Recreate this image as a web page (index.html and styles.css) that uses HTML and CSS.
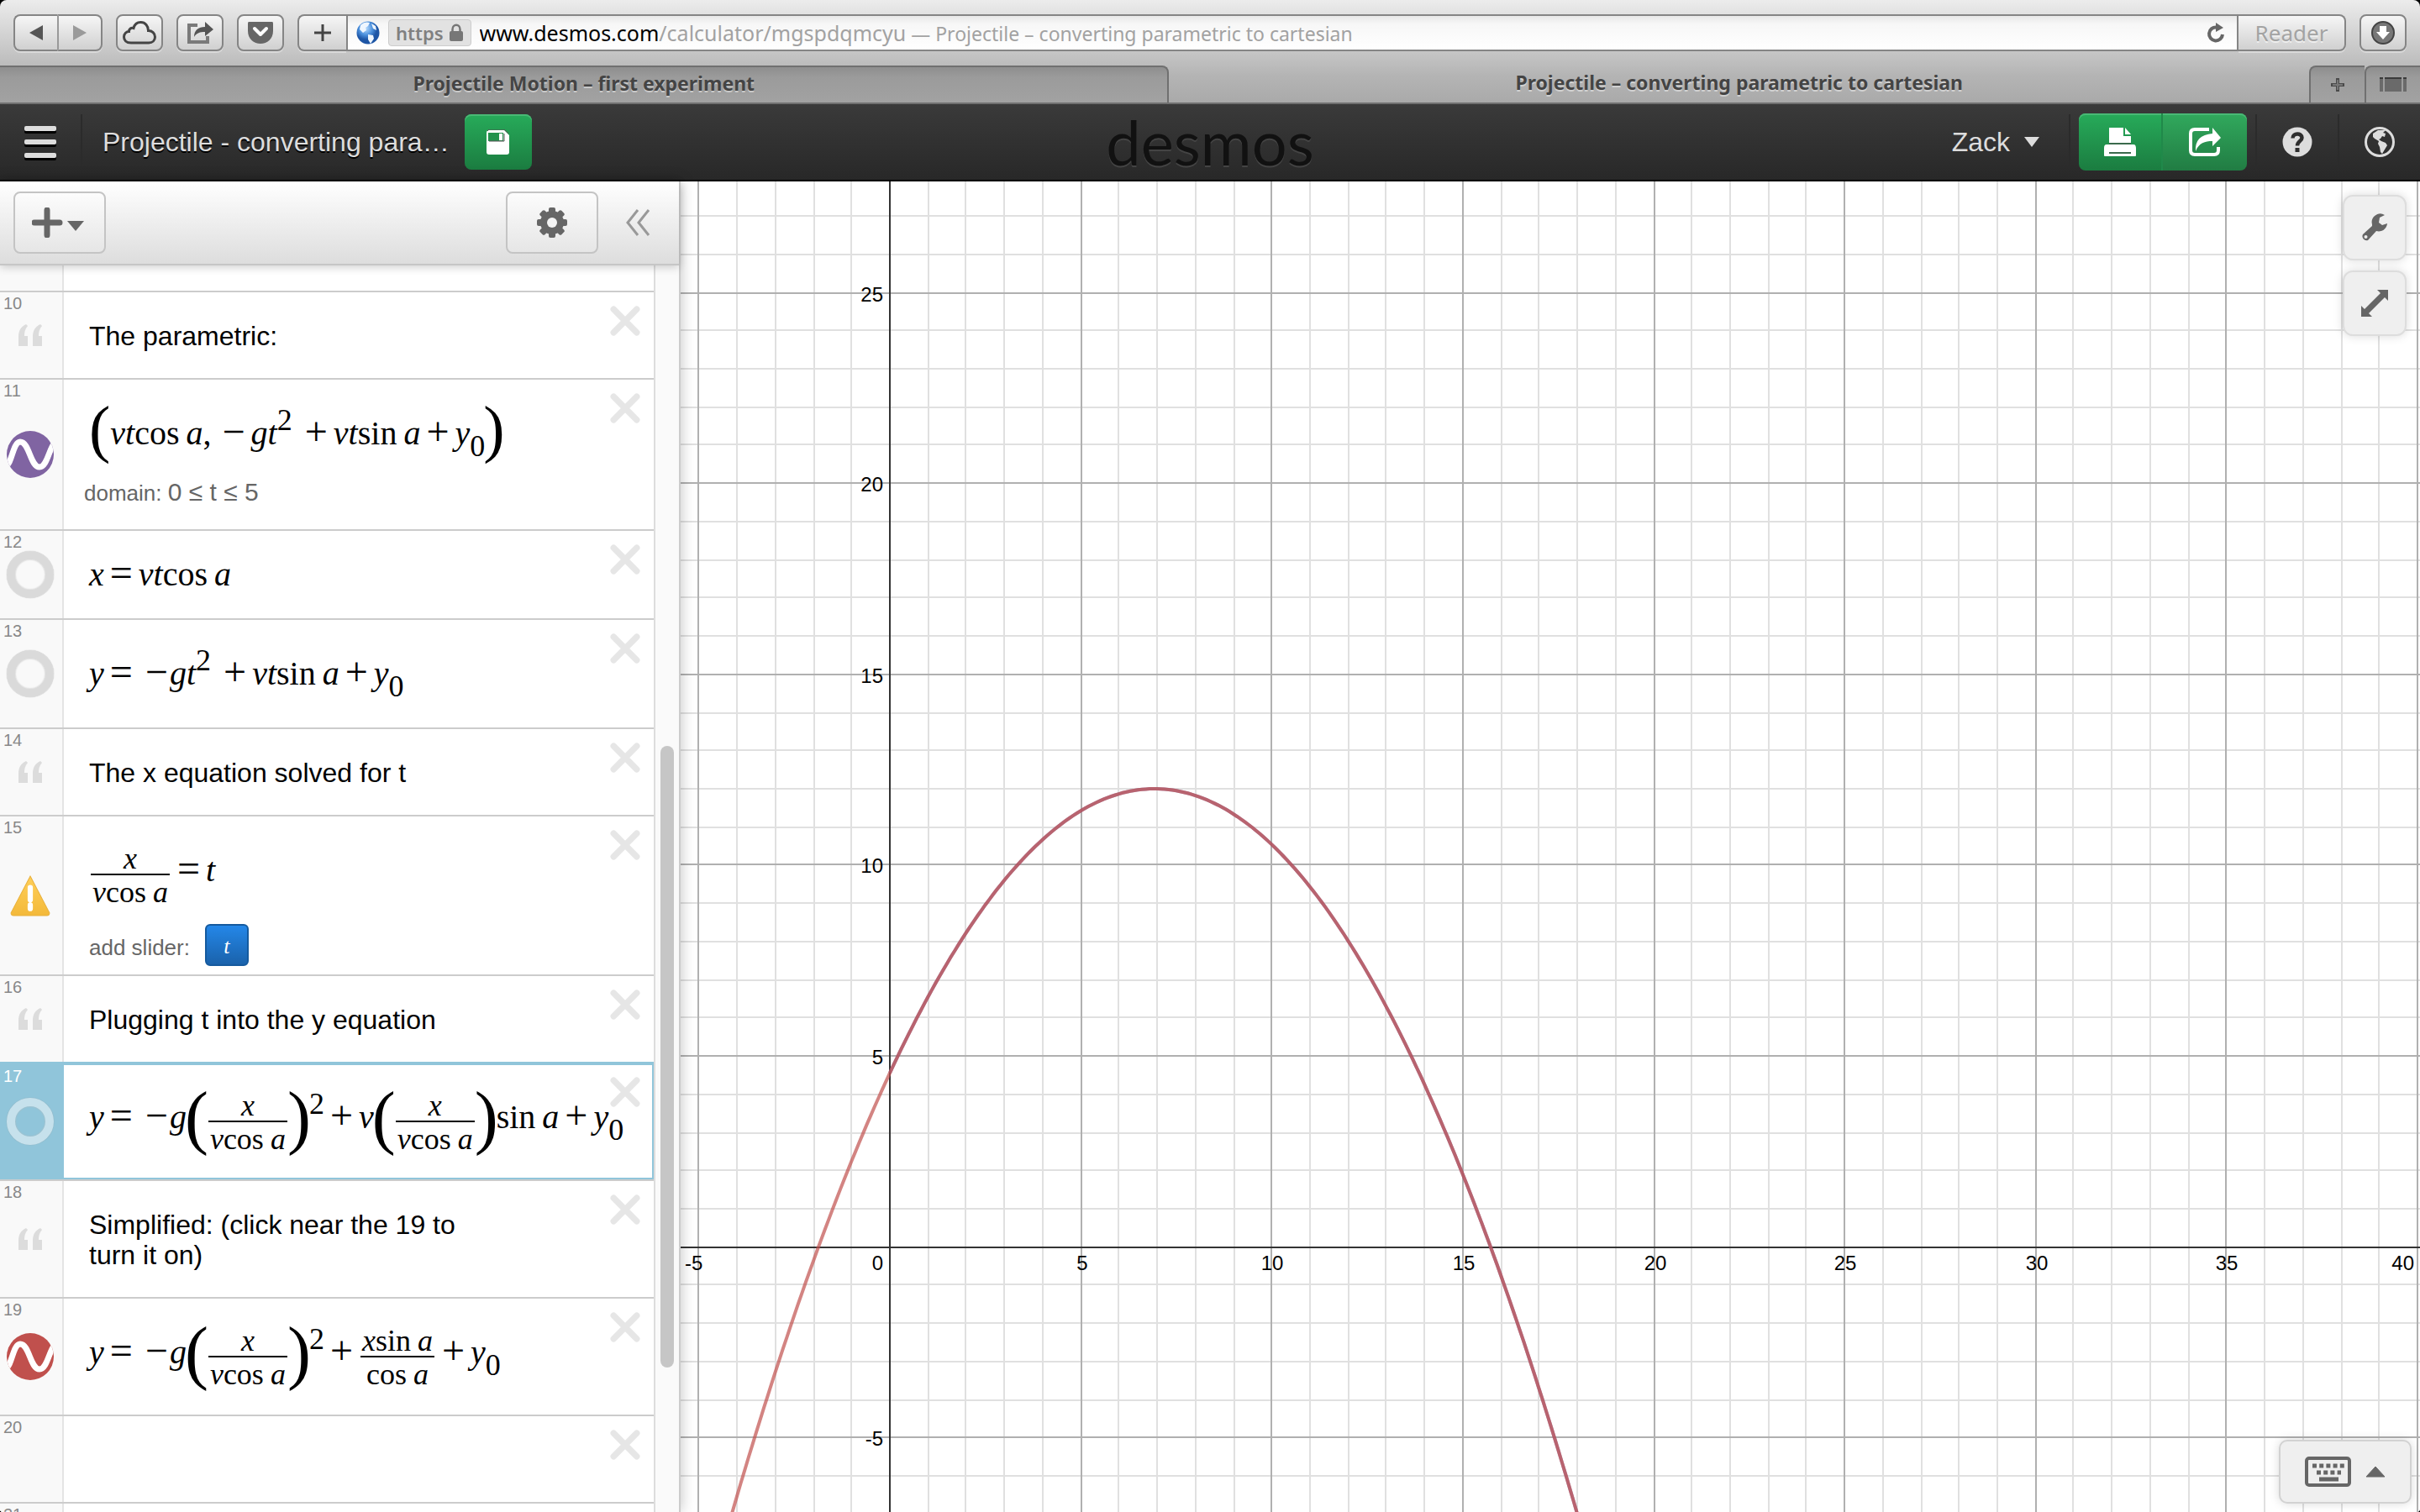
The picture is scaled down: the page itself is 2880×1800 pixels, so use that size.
FILE: index.html
```html
<!DOCTYPE html>
<html lang="en">
<head>
<meta charset="utf-8">
<title>Projectile – converting parametric to cartesian</title>
<link rel="stylesheet" href="styles.css">
</head>
<body>
<svg class="defs" aria-hidden="true">
  <defs>
    <symbol id="i-close" viewBox="0 0 34 34"><path d="M4 4L30 30M30 4L4 30" stroke="currentColor" stroke-width="7" stroke-linecap="round" fill="none"/></symbol>
    <symbol id="i-quote" viewBox="0 0 28 26"><path d="M9 0L11 2C7.500 6 7 10 7 14H11V26H0V15C0 8 2.500 3 9 0ZM26 0L28 2C24.500 6 24 10 24 14H28V26H17V15C17 8 19.500 3 26 0Z" fill="currentColor"/></symbol>
    <symbol id="i-wave" viewBox="0 0 56 56"><path d="M-2 42C6 42 7 13 16 13C27 13 28 43 39 43C48 43 50 22 57 14" stroke="#fff" stroke-width="7" fill="none"/></symbol>
  </defs>
</svg>
<div class="window">
  <header class="toolbar">
    <div class="nav-pair">
      <button class="chrome-btn back" aria-label="Back"><svg width="18" height="20" viewBox="0 0 18 20"><path d="M17 1V19L1 10Z" fill="#555"/></svg></button>
      <button class="chrome-btn forward" aria-label="Forward"><svg width="18" height="20" viewBox="0 0 18 20"><path d="M1 1V19L17 10Z" fill="#9a9a9a"/></svg></button>
    </div>
    <button class="chrome-btn" aria-label="iCloud tabs"><svg width="40" height="28" viewBox="0 0 40 28"><path d="M10 26C4 26 1.500 22.500 1.500 19C1.500 15 4.500 12.500 7.500 12.500C7.500 9.500 10 7.500 13 8.500C14 4.500 17 1.500 21.500 1.500C27 1.500 30.500 6 30.500 11.500C35 11.500 38.500 14.500 38.500 19C38.500 23 35.500 26 31 26Z" fill="none" stroke="#444" stroke-width="3"/></svg></button>
    <button class="chrome-btn" aria-label="Share"><svg width="34" height="28" viewBox="0 0 34 28"><path d="M14 5H4V25H26V18" fill="none" stroke="#7a7a7a" stroke-width="4"/><path d="M10 19C10 11 15 7 23 7V1L33 10L23 18V13C17 13 13 14 10 19Z" fill="#555"/></svg></button>
    <button class="chrome-btn" aria-label="Pocket"><svg width="32" height="28" viewBox="0 0 32 28"><path d="M2 1H30Q31 1 31 3V12C31 21 24 27 16 27C8 27 1 21 1 12V3Q1 1 2 1Z" fill="#666"/><path d="M9 9L16 16L23 9" fill="none" stroke="#fff" stroke-width="4" stroke-linecap="round" stroke-linejoin="round"/></svg></button>
    <div class="address">
      <button class="chrome-btn add" aria-label="Add bookmark"><svg width="20" height="20" viewBox="0 0 20 20"><path d="M10 0V20M0 10H20" stroke="#444" stroke-width="3"/></svg></button>
      <div class="url-field">
        <svg width="28" height="30" viewBox="0 0 28 30"><defs><radialGradient id="globe" cx=".4" cy=".3"><stop offset="0" stop-color="#b9dcff"/><stop offset=".6" stop-color="#4a8fdc"/><stop offset="1" stop-color="#1d55a5"/></radialGradient></defs><circle cx="14" cy="15" r="13.500" fill="url(#globe)"/><path d="M5 6C9 2 13 2 16 3L14 7L11 9L12 12L8 15L4 11ZM18 4L23 7L24 12L20 10ZM14 17L20 18L21 22L17 28L14 23Z" fill="#eef6ff"/></svg>
        <span class="https">https<svg width="18" height="22" viewBox="0 0 18 22"><path d="M4.500 10V7C4.500 0 13.500 0 13.500 7V10" fill="none" stroke="#777" stroke-width="2.500"/><rect x="1" y="9" width="16" height="12" rx="2" fill="#777"/></svg></span>
        <div class="url" role="textbox" contenteditable="true" spellcheck="false" aria-label="Address"><span class="host">www.desmos.com</span><span>/calculator/mgspdqmcyu</span><span class="page-title"> — Projectile – converting parametric to cartesian</span></div>
        <button class="reload" aria-label="Reload"><svg width="22" height="24" viewBox="0 0 22 24"><path d="M12 5.500A8 8 0 1 0 19 14" fill="none" stroke="#666" stroke-width="4"/><path d="M11 0L20 6L11 11Z" fill="#666"/></svg></button>
      </div>
      <button class="chrome-btn reader" disabled>Reader</button>
    </div>
    <button class="chrome-btn" aria-label="Downloads"><svg width="28" height="28" viewBox="0 0 28 28"><circle cx="14" cy="14" r="13" fill="#777" stroke="#444" stroke-width="2"/><path d="M10 6H18V13H22L14 22L6 13H10Z" fill="#fff"/></svg></button>
  </header>
  <nav class="tabs">
    <button class="tab inactive">Projectile Motion – first experiment</button>
    <button class="tab">Projectile – converting parametric to cartesian</button>
    <button class="tab-tool" aria-label="New tab"><svg width="16" height="16" viewBox="0 0 16 16"><path d="M8 0V16M0 8H16" stroke="#4a4a4a" stroke-width="4"/><path d="M8 2V14M2 8H14" stroke="#777" stroke-width="2"/></svg></button>
    <button class="tab-tool" aria-label="Show all tabs"><svg width="32" height="18" viewBox="0 0 32 18"><path d="M0 0H4V17H0ZM6 0H26V17H6ZM28 0H32V17H28Z" fill="#6a6a6a"/><path d="M0 1H4M6 1H26M28 1H32" stroke="#3a3a3a" stroke-width="2"/></svg></button>
  </nav>

  <header class="app-bar">
    <div class="bar-left">
      <button class="menu" aria-label="Open menu"><span></span><span></span><span></span></button>
      <h1 class="graph-title">Projectile - converting para…</h1>
      <button class="green save" aria-label="Save"><svg width="28" height="30" viewBox="0 0 28 30"><path d="M3 1H21L27 7V27Q27 30 24 30H3Q0 30 0 27V4Q0 1 3 1Z" fill="#fff"/><path d="M2 4H20V14H2Z" fill="#23924c"/><path d="M1 2L3 0H21L26 5" fill="none" stroke="#555" stroke-width="1"/><rect x="15" y="5" width="4" height="8" fill="#fff"/><path d="M3 14H21V5" stroke="#555" fill="none"/></svg></button>
    </div>
    <a class="logo" href="#">desmos</a>
    <div class="bar-right">
      <button class="user">Zack<svg width="20" height="13" viewBox="0 0 20 13"><path d="M1 0H19L10 12Z" fill="#ddd"/></svg></button>
      <div class="green-group">
        <button class="green" aria-label="Print"><svg width="40" height="36" viewBox="0 0 40 36"><path d="M7 1H24V11H33V20H7Z" fill="#fff"/><path d="M26 1L33 9H26Z" fill="#fff"/><path d="M4 21H36Q39 21 39 25V34Q39 35 38 35H2Q1 35 1 34V25Q1 21 4 21Z" fill="#fff"/><path d="M7 20H33M7 31H33" stroke="#3b6a4c" stroke-width="2"/></svg></button>
        <button class="green" aria-label="Share graph"><svg width="40" height="36" viewBox="0 0 40 36"><path d="M25 3H8Q3 3 3 8V28Q3 33 8 33H31Q36 33 36 28V24" fill="none" stroke="#fff" stroke-width="4"/><path d="M9 29C8 16 15 9 29 8V1L39 13L29 23V17C20 17 13 19 9 29Z" fill="#fff"/></svg></button>
      </div>
      <button class="round" aria-label="Help"><svg width="36" height="36" viewBox="0 0 36 36"><circle cx="18" cy="18" r="17.500" fill="#ddd"/><path d="M12.500 13.500C12.500 7 23.500 7 23.500 13C23.500 17 18 17 18 22.500" fill="none" stroke="#2e2e2e" stroke-width="4.500"/><rect x="15.500" y="25" width="5" height="5" fill="#2e2e2e"/></svg></button>
      <button class="round" aria-label="Language"><svg width="36" height="36" viewBox="0 0 36 36"><circle cx="18" cy="18" r="16.500" fill="none" stroke="#ddd" stroke-width="3"/><path d="M10 8L16 4L25 4L22 7L25 8L24 12L21 11L19 14L17 15L20 17L25 19L27 22L24 27L21 32L19 30L18 24L16 20L17 17L12 14L10 12Z" fill="#ddd"/></svg></button>
    </div>
  </header>

  <main class="workspace">
    <section class="panel" aria-label="Expressions">
      <div class="panel-head">
        <button class="light-btn add-item" aria-label="Add item"><svg width="62" height="36" viewBox="0 0 62 36"><path d="M18 3V33M3 18H33" stroke="#666" stroke-width="7" stroke-linecap="round"/><path d="M42 16H62L52 28Z" fill="#666"/></svg></button>
        <div class="head-right">
          <button class="light-btn" aria-label="Settings"><svg width="38" height="38" viewBox="-19 -19 38 38"><g fill="#666"><circle r="14"/><g id="teeth"><rect x="-4" y="-18" width="8" height="36" rx="2"/><rect x="-18" y="-4" width="36" height="8" rx="2"/></g><use href="#teeth" transform="rotate(45)"/></g><circle r="6" fill="#f3f3f3"/></svg></button>
          <button class="collapse" aria-label="Hide list"><svg width="30" height="34" viewBox="0 0 30 34"><path d="M15 2L3 17L15 32M28 2L16 17L28 32" fill="none" stroke="#999" stroke-width="3"/></svg></button>
        </div>
      </div>
      <div class="panel-body">
      <ol class="list">
        <li class="row sliver"><div class="gutter"></div><div class="body"></div></li>

        <li class="row"><div class="gutter"><span class="num">10</span><svg class="quote"><use href="#i-quote"/></svg></div>
          <div class="body note"><p>The parametric:</p><button class="close" aria-label="Delete"><svg><use href="#i-close"/></svg></button></div></li>

        <li class="row"><div class="gutter"><span class="num">11</span><svg class="marker purple"><use href="#i-wave"/></svg></div>
          <div class="body parametric"><div class="math"><span class="paren small open">(</span><i>v</i><i>t</i><span class="fn">cos</span><i>a</i><span class="comma">,</span><span class="op">−</span><i>g</i><i>t</i><span class="sup wide">2</span><span class="op">+</span><i>v</i><i>t</i><span class="fn">sin</span><i>a</i><span class="op">+</span><i>y</i><span class="sub">0</span><span class="paren small">)</span></div>
          <div class="domain">domain: <span>0 ≤ t ≤ 5</span></div><button class="close" aria-label="Delete"><svg><use href="#i-close"/></svg></button></div></li>

        <li class="row"><div class="gutter"><span class="num">12</span><span class="marker off"></span></div>
          <div class="body simple"><div class="math"><i>x</i><span class="op">=</span><i>v</i><i>t</i><span class="fn">cos</span><i>a</i></div><button class="close" aria-label="Delete"><svg><use href="#i-close"/></svg></button></div></li>

        <li class="row"><div class="gutter"><span class="num">13</span><span class="marker off"></span></div>
          <div class="body medium"><div class="math"><i>y</i><span class="op">=</span><span class="neg">−</span><i>g</i><i>t</i><span class="sup wide">2</span><span class="op">+</span><i>v</i><i>t</i><span class="fn">sin</span><i>a</i><span class="op">+</span><i>y</i><span class="sub">0</span></div><button class="close" aria-label="Delete"><svg><use href="#i-close"/></svg></button></div></li>

        <li class="row"><div class="gutter"><span class="num">14</span><svg class="quote"><use href="#i-quote"/></svg></div>
          <div class="body note"><p>The x equation solved for t</p><button class="close" aria-label="Delete"><svg><use href="#i-close"/></svg></button></div></li>

        <li class="row"><div class="gutter"><span class="num">15</span><svg class="warn" viewBox="0 0 48 48"><defs><linearGradient id="amber" x2="0" y2="1"><stop offset="0" stop-color="#ffcf5a"/><stop offset="1" stop-color="#f3b93a"/></linearGradient></defs><path d="M24 2L46 44Q46 47 43 47H5Q2 47 2 44Z" fill="url(#amber)" stroke="#e9b13c" stroke-width="1"/><path d="M24 15V29M24 35V39" stroke="#fff" stroke-width="6" stroke-linecap="round"/></svg></div>
          <div class="body undefined"><div class="math"><span class="frac"><span class="n"><i>x</i></span><span class="d"><i>v</i><span class="fn">cos</span><i>a</i></span></span><span class="op">=</span><i>t</i></div>
          <div class="slider-row"><span id="slider-label">add slider:</span><button class="slider-btn" aria-describedby="slider-label">t</button></div><button class="close" aria-label="Delete"><svg><use href="#i-close"/></svg></button></div></li>

        <li class="row"><div class="gutter"><span class="num">16</span><svg class="quote"><use href="#i-quote"/></svg></div>
          <div class="body note"><p>Plugging t into the y equation</p><button class="close" aria-label="Delete"><svg><use href="#i-close"/></svg></button></div></li>

        <li class="row selected"><div class="gutter"><span class="num">17</span><span class="marker off"></span></div>
          <div class="body tall"><div class="math"><i>y</i><span class="op">=</span><span class="neg">−</span><i>g</i><span class="paren">(</span><span class="frac"><span class="n"><i>x</i></span><span class="d"><i>v</i><span class="fn">cos</span><i>a</i></span></span><span class="paren">)</span><span class="sup">2</span><span class="op">+</span><i>v</i><span class="paren">(</span><span class="frac"><span class="n"><i>x</i></span><span class="d"><i>v</i><span class="fn">cos</span><i>a</i></span></span><span class="paren">)</span><span class="fn">sin</span><i>a</i><span class="op">+</span><i>y</i><span class="sub">0</span></div><button class="close" aria-label="Delete"><svg><use href="#i-close"/></svg></button></div></li>

        <li class="row"><div class="gutter"><span class="num">18</span><svg class="quote"><use href="#i-quote"/></svg></div>
          <div class="body note"><p>Simplified: (click near the 19 to turn it on)</p><button class="close" aria-label="Delete"><svg><use href="#i-close"/></svg></button></div></li>

        <li class="row"><div class="gutter"><span class="num">19</span><svg class="marker red"><use href="#i-wave"/></svg></div>
          <div class="body tall"><div class="math"><i>y</i><span class="op">=</span><span class="neg">−</span><i>g</i><span class="paren">(</span><span class="frac"><span class="n"><i>x</i></span><span class="d"><i>v</i><span class="fn">cos</span><i>a</i></span></span><span class="paren">)</span><span class="sup">2</span><span class="op">+</span><span class="frac"><span class="n"><i>x</i><span class="fn">sin</span><i>a</i></span><span class="d"><span class="fn">cos</span><i>a</i></span></span><span class="op">+</span><i>y</i><span class="sub">0</span></div><button class="close" aria-label="Delete"><svg><use href="#i-close"/></svg></button></div></li>

        <li class="row"><div class="gutter"><span class="num">20</span></div><div class="body empty"><button class="close" aria-label="Delete"><svg><use href="#i-close"/></svg></button></div></li>
        <li class="row"><div class="gutter"><span class="num">21</span></div><div class="body empty"></div></li>
      </ol>
      <div class="scroll-track"><div class="scroll-thumb"></div></div>
      </div>
    </section>

    <section class="graph" aria-label="Graph">
      <svg id="plot" width="100%" height="100%"></svg>
      <div class="graph-tools">
        <button class="float-btn" aria-label="Graph settings"><svg width="34" height="34" viewBox="0 0 34 34"><path d="M29 2A10 10 0 0 0 14 13L14 15L3 25A5 5 0 0 0 9 32L19 21A10 10 0 0 0 32 12L26 14L22 11L23 5Z" fill="#666"/><circle cx="6.500" cy="28" r="2" fill="#eee"/></svg></button>
        <button class="float-btn" aria-label="Zoom fit"><svg width="34" height="34" viewBox="0 0 34 34"><path d="M20 1H33V14L29 10L10 29L14 33H1V20L5 24L24 5Z" fill="#666"/></svg></button>
      </div>
      <button class="keypad" aria-label="Show keypad"><svg width="56" height="36" viewBox="0 0 56 36"><rect x="2" y="2" width="51" height="32" rx="3" fill="none" stroke="#666" stroke-width="4"/><path d="M9 11H48" stroke="#666" stroke-width="5" stroke-dasharray="5 3.200"/><path d="M14 19H43" stroke="#666" stroke-width="5" stroke-dasharray="5 3.200"/><path d="M17 27H40" stroke="#666" stroke-width="5"/></svg><svg width="24" height="14" viewBox="0 0 24 14"><path d="M12 1L23 13H1Z" fill="#666" stroke="#666" stroke-linejoin="round"/></svg></button>
    </section>
  </main>
</div>
<script src="graph.js"></script>
</body>
</html>
```
FILE: styles.css
```css
* { box-sizing: border-box; }
html, body { height: 100%; }
body { margin: 0; background: #000; font-family: "Liberation Sans", Arial, sans-serif; }
button { font: inherit; color: inherit; border: 0; background: none; padding: 0; margin: 0; display: flex; align-items: center; justify-content: center; }
svg { display: block; flex: none; }
.defs { position: absolute; width: 0; height: 0; }

.window { height: 100%; display: flex; flex-direction: column; overflow: hidden; border-radius: 8px 8px 4px 4px; background: linear-gradient(#ececec 0, #b4b4b4 90px, #a9a9a9 124px); }

/* browser toolbar */
.toolbar { height: 78px; padding: 0 16px; display: flex; align-items: center; gap: 16px; font-family: "Noto Sans", sans-serif; }
.chrome-btn { width: 56px; height: 44px; border: 2px solid #858585; border-radius: 8px; background: linear-gradient(#f6f6f6, #d0d0d0); box-shadow: 0 2px 0 rgba(255,255,255,.35); }
.nav-pair { display: flex; }
.nav-pair .back { border-radius: 8px 0 0 8px; border-right: 0; width: 52px; }
.nav-pair .forward { border-radius: 0 8px 8px 0; width: 54px; border-left: 2px solid #999; }
.address { flex: 1; display: flex; min-width: 0; }
.address .add { border-radius: 8px 0 0 8px; width: 58px; border-right: 0; }
.url-field { flex: 1; min-width: 0; display: flex; align-items: center; gap: 10px; height: 44px; padding: 0 14px 0 10px; border: 2px solid #858585; background: linear-gradient(#e8e8e8, #f7f7f7 10px, #fff); }
.https { display: flex; align-items: center; gap: 6px; height: 32px; padding: 0 8px; border: 1px solid #ccc; border-radius: 4px; background: #e2e2e2; color: #808080; font-size: 22px; font-weight: 600; }
.url { flex: 1; font-size: 25px; line-height: 32px; color: #a2a2a2; white-space: nowrap; overflow: hidden; outline: 0; }
.url .host { color: #000; }
.url .page-title { font-size: 23px; }
.reader { width: 128px; border-radius: 0 8px 8px 0; border-left: 0; font-size: 26px; color: #a3a3a3; text-shadow: 0 2px 0 #eee; }

/* tabs */
.tabs { height: 46px; display: flex; border-bottom: 2px solid #707070; font: bold 23px/32px "Noto Sans", sans-serif; color: #444; }
.tab { flex: 1358; padding-bottom: 4px; text-shadow: 0 2px 0 rgba(255,255,255,.45); }
.tab.inactive { flex: 1391; background: linear-gradient(#8e8e8e, #9b9b9b 12px, #a2a2a2); border: solid #707070; border-width: 2px 2px 0 0; border-radius: 0 8px 0 0; }
.tab-tool { width: 66px; background: linear-gradient(#8e8e8e, #9b9b9b 12px, #a2a2a2); border: solid #707070; border-width: 2px 0 0 2px; border-radius: 8px 0 0 0; }

/* application bar */
.app-bar { height: 92px; display: grid; grid-template-columns: 1fr auto 1fr; align-items: center; background: linear-gradient(#3a3a3a, #282828); border-bottom: 2px solid #000; color: #ddd; font-size: 32px; text-shadow: 0 2px 0 #000; }
.bar-left, .bar-right { display: flex; align-items: center; }
.bar-right { justify-content: flex-end; }
.menu { width: 98px; height: 66px; flex-direction: column; gap: 10px; border-right: 2px solid #2b2b2b; }
.menu span { width: 38px; height: 6px; background: #ddd; border-radius: 2px; box-shadow: 0 3px 0 #000; }
.graph-title { margin: 0 18px 0 24px; font-size: 32px; font-weight: normal; line-height: 40px; white-space: nowrap; }
.green { width: 80px; height: 66px; border-radius: 8px; background: linear-gradient(#27ab5a, #1b7c40); box-shadow: inset 0 2px 0 #49b975; }
.logo { font: 74px/72px Lato, sans-serif; color: #111; text-decoration: none; text-shadow: 0 2px 0 #444; }
.user { gap: 16px; padding-right: 34px; height: 66px; border-right: 2px solid #2b2b2b; }
.green-group { display: flex; margin: 0 10px; }
.green-group .green { width: 100px; height: 68px; }
.green-group .green:first-child { border-radius: 8px 0 0 8px; border-right: 2px solid #20894a; }
.green-group .green:last-child { border-radius: 0 8px 8px 0; background: linear-gradient(#31a95d, #217c43); }
.round { width: 98px; height: 66px; border-left: 2px solid #2b2b2b; }

/* workspace */
.workspace { flex: 1; min-height: 0; display: flex; background: #fff; }
.panel { width: 810px; flex: none; display: flex; flex-direction: column; border-right: 2px solid #ccc; background: #fafafa; box-shadow: 0 0 16px rgba(0,0,0,.25); position: relative; z-index: 1; }
.panel-head { height: 100px; flex: none; padding: 0 16px; display: flex; align-items: center; justify-content: space-between; background: linear-gradient(#fff, #ddd); border-bottom: 2px solid #c6c6c6; box-shadow: 0 2px 10px rgba(0,0,0,.2); position: relative; z-index: 1; }
.head-right { display: flex; align-items: center; gap: 32px; padding-right: 18px; }
.light-btn { width: 110px; height: 74px; border: 2px solid #c4c4c4; border-radius: 8px; background: linear-gradient(#fcfcfc, #e6e6e6); }
.add-item { padding-right: 4px; }
.panel-body { flex: 1; min-height: 0; display: flex; }
.list { flex: 1; margin: 0; padding: 0; list-style: none; overflow: hidden; border-right: 2px solid #ddd; background: #fff; }
.scroll-track { width: 28px; padding: 572px 6px 0 6px; }
.scroll-thumb { height: 740px; border-radius: 8px; background: #c6c6c6; }

.row { display: flex; border-bottom: 2px solid #ccc; }
.gutter { width: 76px; flex: none; padding-right: 2px; display: flex; align-items: center; justify-content: center; position: relative; background: #f9f9f9; border-right: 2px solid #e4e4e4; }
.num { position: absolute; left: 4px; top: 2px; font-size: 20px; line-height: 22px; color: #888; }
.quote { width: 28px; height: 26px; color: #dcdcdc; }
.marker { width: 56px; height: 56px; border-radius: 50%; overflow: hidden; }
.marker.purple { background: #8064a2; }
.marker.red { background: #c0504d; }
.marker.off { border: 10px solid #dadada; box-shadow: inset 0 0 2px #bbb, 0 0 1px #999; }
.warn { width: 50px; height: 50px; }
.body { flex: 1; min-width: 0; position: relative; padding: 20px 0 0 30px; }
.close { position: absolute; right: 16px; top: 16px; color: #e6e6e6; }
.close svg { width: 36px; height: 36px; }
.sliver .body { min-height: 30px; padding: 0; }
.note { padding: 34px 0 32px 30px; }
.note p { margin: 0; max-width: 480px; font-size: 32px; line-height: 36px; }
.simple { padding: 8px 0 8px 30px; }
.medium { padding-bottom: 20px; }
.tall { padding-bottom: 30px; }
.parametric { padding-bottom: 26px; }
.undefined { padding-bottom: 10px; }
.empty { min-height: 102px; }
.domain { height: 36px; margin: 8px 0 0 -6px; font-size: 26px; line-height: 36px; color: #666; }
.domain span { font-size: 30px; }
.slider-row { display: flex; align-items: center; gap: 18px; height: 50px; margin-top: 20px; font-size: 26px; line-height: 32px; color: #666; }
.slider-row span { padding-top: 6px; }
.slider-btn { width: 52px; height: 50px; padding-top: 4px; border: 2px solid #155a9e; border-radius: 6px; background: linear-gradient(#2487e8, #1a62ab); color: #fff; font: italic 26px "Liberation Serif", serif; }
.selected { box-shadow: 0 -2px 0 #90c5da; }
.selected .gutter { background: #90c5da; border-color: #90c5da; }
.selected .num { color: #fff; top: 4px; }
.selected .marker { border-color: #c6e1ec; }
.selected .body { background: #fff; border: solid #90c5da; border-width: 2px 2px 2px 0; padding: 18px 0 28px 30px; }
.selected .close { top: 14px; right: 14px; }

/* formulas */
.math { display: flex; align-items: center; height: 88px; font: 40px/48px "Liberation Serif", "Times New Roman", serif; color: #000; white-space: nowrap; }
.fn + i { margin-left: 8px; }
.op, .neg { font-size: 48px; margin: 0 7px 4px; }
.neg { margin: 0 2px 4px 8px; }
.comma { margin-right: 6px; }
.sup { font-size: 36px; padding-bottom: 32px; }
.sup.wide { margin-right: 8px; }
.sub { font-size: 36px; padding-top: 30px; }
.paren { font-size: 84px; line-height: 84px; margin: 0 -2px; }
.paren.small { font-size: 76px; padding-bottom: 12px; }
.paren.open { margin: 0; }
.frac { display: flex; flex-direction: column; align-items: stretch; margin: 13px 2px 0; font-size: 36px; }
.frac .n, .frac .d { display: flex; justify-content: center; padding: 0 2px; }
.frac .n { line-height: 36px; border-bottom: 2px solid #000; }
.frac .d { line-height: 40px; }

/* graph */
.graph { flex: 1; min-width: 0; position: relative; overflow: hidden; }
#plot text { font: 24px "Liberation Sans", Arial, sans-serif; fill: #000; }
.graph-tools { position: absolute; top: 16px; right: 16px; display: flex; flex-direction: column; gap: 12px; }
.float-btn, .keypad { height: 78px; width: 76px; border: 2px solid #ddd; border-radius: 12px; background: #efefef; box-shadow: 0 0 12px rgba(0,0,0,.15); }
.keypad { position: absolute; right: 10px; bottom: 10px; width: 158px; height: 76px; gap: 16px; border-color: #d2d2d2; border-radius: 10px; }
```
FILE: graph.js
```js
// Draws grid, axes, labels and the two trajectories into the plot.
const plot = document.getElementById('plot');
const UNIT = 45.45;
const f = x => 12 - 0.155 * (x - 6.93) ** 2;
const snap = v => 2 * Math.round((v - 1) / 2) + 1;

function draw() {
  const w = plot.clientWidth, h = plot.clientHeight;
  const ox = Math.round(w * 0.1203), oy = h * 0.80075;
  const px = x => snap(ox + x * UNIT), py = y => snap(oy - y * UNIT);
  const x0 = Math.floor(-ox / UNIT), x1 = Math.ceil((w - ox) / UNIT);
  const y0 = Math.floor((oy - h) / UNIT), y1 = Math.ceil(oy / UNIT);
  const labelY = py(0) + 27;
  let minor = '', major = '', labels = '';
  const text = (x, y, anchor, s) => `<text x="${x}" y="${y}" text-anchor="${anchor}">${s}</text>`;
  for (let x = x0; x <= x1; x++) {
    const d = `M${px(x)} 0V${h}`;
    if (x % 5) { minor += d; continue; }
    major += d;
    if (x === 0) labels += text(px(0) - 8, labelY, 'end', 0);
    else if (px(x) < 24) labels += text(5, labelY, 'start', x);
    else if (px(x) > w - 14 && px(x) <= w) labels += text(w - 7, labelY, 'end', x);
    else labels += text(px(x) + 1, labelY, 'middle', x);
  }
  for (let y = y0; y <= y1; y++) {
    const d = `M0 ${py(y)}H${w}`;
    if (y % 5) { minor += d; continue; }
    major += d;
    if (y) labels += text(px(0) - 8, py(y) + 10, 'end', y);
  }
  const curve = (a, b) => {
    let d = '';
    for (let x = a; x <= b; x += 0.1) d += `${d ? 'L' : 'M'}${(ox + x * UNIT).toFixed(1)} ${(oy - f(x) * UNIT).toFixed(1)}`;
    return d;
  };
  plot.innerHTML = `
    <g fill="none" stroke-width="2">
      <path d="${minor}" stroke="#e0e0e0"/>
      <path d="${major}" stroke="#b0b0b0"/>
      <path d="M${px(0)} 0V${h}M0 ${py(0)}H${w}" stroke="#333"/>
    </g>
    <g fill="none" stroke-width="4" stroke-opacity=".7">
      <path d="${curve(0, 19)}" stroke="#8064a2"/>
      <path d="${curve(-6, 19)}" stroke="#c0504d"/>
    </g>
    ${labels}`;
}
draw();
addEventListener('resize', draw);
```
